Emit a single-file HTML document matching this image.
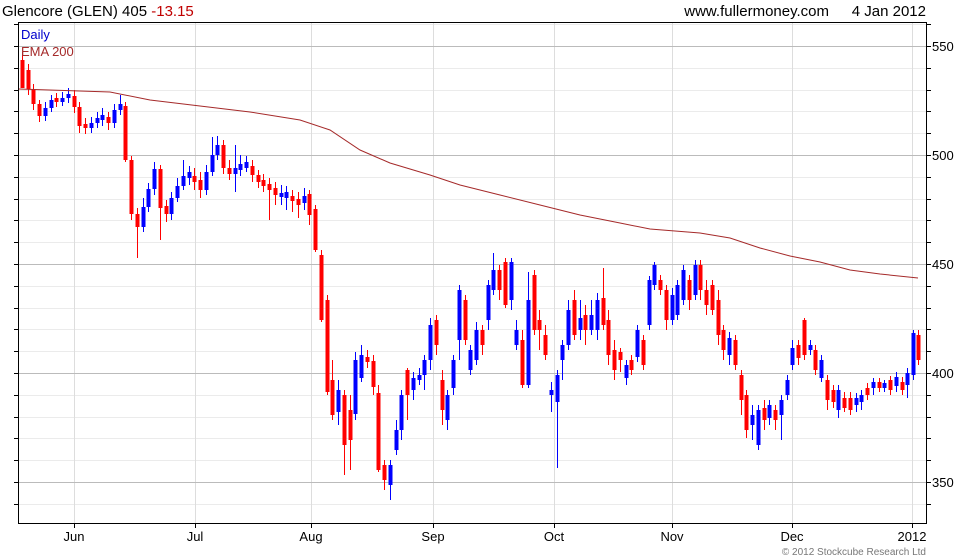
<!DOCTYPE html>
<html><head><meta charset="utf-8"><style>
html,body{margin:0;padding:0;background:#fff;width:980px;height:560px;overflow:hidden;font-family:"Liberation Sans",sans-serif}
svg{display:block}
</style></head><body>
<svg width="980" height="560" xmlns="http://www.w3.org/2000/svg" font-family="Liberation Sans, sans-serif">
<text x="2" y="16" font-size="15" fill="#000">Glencore (GLEN) 405 <tspan fill="#c00000">-13.15</tspan></text>
<text x="829" y="16" font-size="15" fill="#000" text-anchor="end">www.fullermoney.com</text>
<text x="926" y="16" font-size="15" fill="#000" text-anchor="end">4 Jan 2012</text>
<path fill="none" stroke="#ebebeb" d="M19 24.5H926M19 68.5H926M19 90.5H926M19 111.5H926M19 133.5H926M19 177.5H926M19 199.5H926M19 220.5H926M19 242.5H926M19 286.5H926M19 308.5H926M19 329.5H926M19 351.5H926M19 395.5H926M19 417.5H926M19 438.5H926M19 460.5H926M19 504.5H926"/>
<path fill="none" stroke="#ddd" d="M74.5 23V523M195.5 23V523M311.5 23V523M433.5 23V523M554.5 23V523M672.5 23V523M792.5 23V523M912.5 23V523"/>
<path fill="none" stroke="#bbb" d="M19 46.5H926M19 155.5H926M19 264.5H926M19 373.5H926M19 482.5H926"/>
<path fill="none" stroke="#000" d="M926 24.5h5M926 46.5h5M926 68.5h5M926 90.5h5M926 111.5h5M926 133.5h5M926 155.5h5M926 177.5h5M926 199.5h5M926 220.5h5M926 242.5h5M926 264.5h5M926 286.5h5M926 308.5h5M926 329.5h5M926 351.5h5M926 373.5h5M926 395.5h5M926 417.5h5M926 438.5h5M926 460.5h5M926 482.5h5M926 504.5h5
M14 24.5h5M14 46.5h5M14 68.5h5M14 90.5h5M14 111.5h5M14 133.5h5M14 155.5h5M14 177.5h5M14 199.5h5M14 220.5h5M14 242.5h5M14 264.5h5M14 286.5h5M14 308.5h5M14 329.5h5M14 351.5h5M14 373.5h5M14 395.5h5M14 417.5h5M14 438.5h5M14 460.5h5M14 482.5h5M14 504.5h5
M74.5 523v5M195.5 523v5M311.5 523v5M433.5 523v5M554.5 523v5M672.5 523v5M792.5 523v5M912.5 523v5"/>

<path fill="none" stroke="#ff0000" stroke-width="1" d="M22.5 52V78M28.5 64V95M33.5 84V110M39.5 100V122M56.5 93V107M74.5 90V113M79.5 102V133M85.5 118V134M108.5 112V130M125.5 102V162M131.5 156V220M137.5 208V258M160.5 165V240M166.5 200V222M194.5 168V190M200.5 172V198M223.5 140V174M229.5 160V180M252.5 160V182M258.5 170V188M263.5 174V192M269.5 178V220M275.5 182V205M292.5 190V212M298.5 192V218M309.5 190V225M315.5 205V252M321.5 250V322M327.5 295V395M332.5 360V420M344.5 390V475M350.5 395V470M367.5 350V368M373.5 355V395M378.5 385V472M384.5 460V490M407.5 368V420M436.5 315V355M442.5 370V425M465.5 295V345M482.5 325V355M499.5 265V300M505.5 258V308M522.5 330V388M534.5 270V335M539.5 310V350M545.5 325V360M574.5 290V340M585.5 305V345M603.5 268V330M608.5 310V365M614.5 340V380M620.5 348V372M631.5 355V375M643.5 335V370M660.5 275V295M666.5 285V330M689.5 275V310M700.5 260V300M706.5 280V315M712.5 280V315M718.5 290V345M723.5 325V360M735.5 335V370M741.5 370V415M746.5 390V438M764.5 400V430M775.5 405V430M798.5 340V365M804.5 318V360M815.5 345V375M827.5 375V410M833.5 385V408M844.5 392V412M850.5 392V415M867.5 383V400M879.5 378V392M890.5 376V395M902.5 377V395M918.5 330V365"/>
<path fill="none" stroke="#ff0000" stroke-width="4" d="M22.5 60V88M28.5 70V89M33.5 89V104M39.5 104V116M56.5 98V102M74.5 96V107M79.5 107V126M85.5 124V128M108.5 117V123M125.5 106V160M131.5 160V214M137.5 214V227M160.5 169V208M166.5 206V214M194.5 176V182M200.5 180V190M223.5 145V168M229.5 168V174M252.5 166V175M258.5 175V182M263.5 180V186M269.5 184V190M275.5 188V195M292.5 196V201M298.5 199V205M309.5 194V215M315.5 209V250M321.5 255V320M327.5 300V392M332.5 380V415M344.5 395V445M350.5 410V440M367.5 357V362M373.5 361V387M378.5 393V470M384.5 465V480M407.5 370V395M436.5 320V345M442.5 380V410M465.5 300V340M482.5 330V345M499.5 270V290M505.5 262V305M522.5 340V385M534.5 275V330M539.5 320V330M545.5 335V355M574.5 300V335M585.5 315V330M603.5 298V325M608.5 320V355M614.5 350V370M620.5 352V360M631.5 360V370M643.5 340V365M660.5 280V290M666.5 290V320M689.5 280V300M700.5 265V290M706.5 290V305M712.5 285V310M718.5 300V335M723.5 330V350M735.5 340V365M741.5 375V400M746.5 395V430M764.5 408V420M775.5 410V420M798.5 345V358M804.5 320V355M815.5 350V370M827.5 380V400M833.5 390V402M844.5 398V408M850.5 398V410M867.5 388V395M879.5 382V388M890.5 380V390M902.5 382V390M918.5 335V360"/>
<path fill="none" stroke="#0000ff" stroke-width="1" d="M45.5 102V121M51.5 95V112M62.5 92V106M68.5 88V103M91.5 117V133M97.5 112V128M102.5 108V126M114.5 104V128M120.5 95V115M143.5 198V232M148.5 183V212M154.5 162V195M171.5 192V220M177.5 178V202M183.5 160V190M189.5 166V185M206.5 165V195M212.5 137V176M217.5 136V160M235.5 145V192M240.5 155V176M246.5 156V172M281.5 185V205M286.5 186V210M304.5 188V210M338.5 380V425M355.5 352V420M361.5 345V382M390.5 460V500M396.5 420V455M401.5 390V440M413.5 372V400M419.5 368V385M424.5 355V390M430.5 318V370M447.5 390V430M453.5 355V395M459.5 285V360M470.5 345V375M476.5 322V365M488.5 280V330M493.5 253V295M511.5 258V310M516.5 320V350M528.5 272V388M551.5 382V412M557.5 370V468M562.5 340V380M568.5 300V350M580.5 300V340M591.5 300V335M597.5 293V340M626.5 360V385M637.5 325V362M649.5 276V330M654.5 262V290M672.5 288V325M677.5 280V320M683.5 265V305M695.5 260V300M729.5 332V365M752.5 405V440M758.5 405V450M769.5 400V425M781.5 395V440M787.5 375V400M792.5 340V370M810.5 340V355M821.5 355V382M838.5 385V418M856.5 393V412M861.5 390V410M873.5 378V395M884.5 380V392M896.5 372V392M907.5 368V398M913.5 330V380"/>
<path fill="none" stroke="#0000ff" stroke-width="4" d="M45.5 108V116M51.5 100V108M62.5 98V102M68.5 94V98M91.5 123V128M97.5 118V123M102.5 115V120M114.5 110V123M120.5 104V110M143.5 207V227M148.5 189V207M154.5 169V189M171.5 198V214M177.5 186V198M183.5 176V186M189.5 172V178M206.5 172V190M212.5 155V172M217.5 145V155M235.5 168V174M240.5 164V170M246.5 162V168M281.5 193V197M286.5 192V198M304.5 196V203M338.5 390V412M355.5 360V414M361.5 355V378M390.5 465V485M396.5 430V450M401.5 395V430M413.5 378V390M419.5 375V380M424.5 360V375M430.5 325V360M447.5 395V420M453.5 360V388M459.5 290V340M470.5 350V370M476.5 330V360M488.5 285V320M493.5 270V290M511.5 262V300M516.5 330V345M528.5 300V385M551.5 390V395M557.5 375V402M562.5 345V360M568.5 310V345M580.5 318V330M591.5 315V330M597.5 300V330M626.5 365V378M637.5 330V357M649.5 280V325M654.5 265V285M672.5 295V320M677.5 285V315M683.5 270V300M695.5 265V295M729.5 338V355M752.5 415V425M758.5 410V445M769.5 405V418M781.5 400V415M787.5 380V395M792.5 348V365M810.5 345V350M821.5 360V378M838.5 390V410M856.5 398V405M861.5 395V402M873.5 382V388M884.5 383V388M896.5 377V386M907.5 373V385M913.5 333V375"/>
<polyline fill="none" stroke="#a52a2a" stroke-width="1" points="19,89 110,92 150,100 200,106 250,112 300,120 330,130 360,150 390,163 430,175 460,185 500,195 540,205 580,215 620,223 650,229 700,233 730,238 760,248 790,256 820,262 850,270 880,274 918,278"/>
<rect x="18.5" y="22.5" width="908" height="501" fill="none" stroke="#000"/>
<text x="21" y="39" font-size="13" fill="#0000cc">Daily</text>
<text x="21" y="56" font-size="13" fill="#a52a2a">EMA 200</text>
<g font-size="13" fill="#000">
<text x="932" y="51">550</text><text x="932" y="160">500</text><text x="932" y="269">450</text><text x="932" y="378">400</text><text x="932" y="487">350</text>
<text x="74" y="541" text-anchor="middle">Jun</text><text x="195" y="541" text-anchor="middle">Jul</text><text x="311" y="541" text-anchor="middle">Aug</text><text x="433" y="541" text-anchor="middle">Sep</text><text x="554" y="541" text-anchor="middle">Oct</text><text x="672" y="541" text-anchor="middle">Nov</text><text x="792" y="541" text-anchor="middle">Dec</text><text x="912" y="541" text-anchor="middle">2012</text>
</g>
<text x="926" y="555" font-size="10" fill="#777" text-anchor="end">© 2012 Stockcube Research Ltd</text>
</svg>
</body></html>
